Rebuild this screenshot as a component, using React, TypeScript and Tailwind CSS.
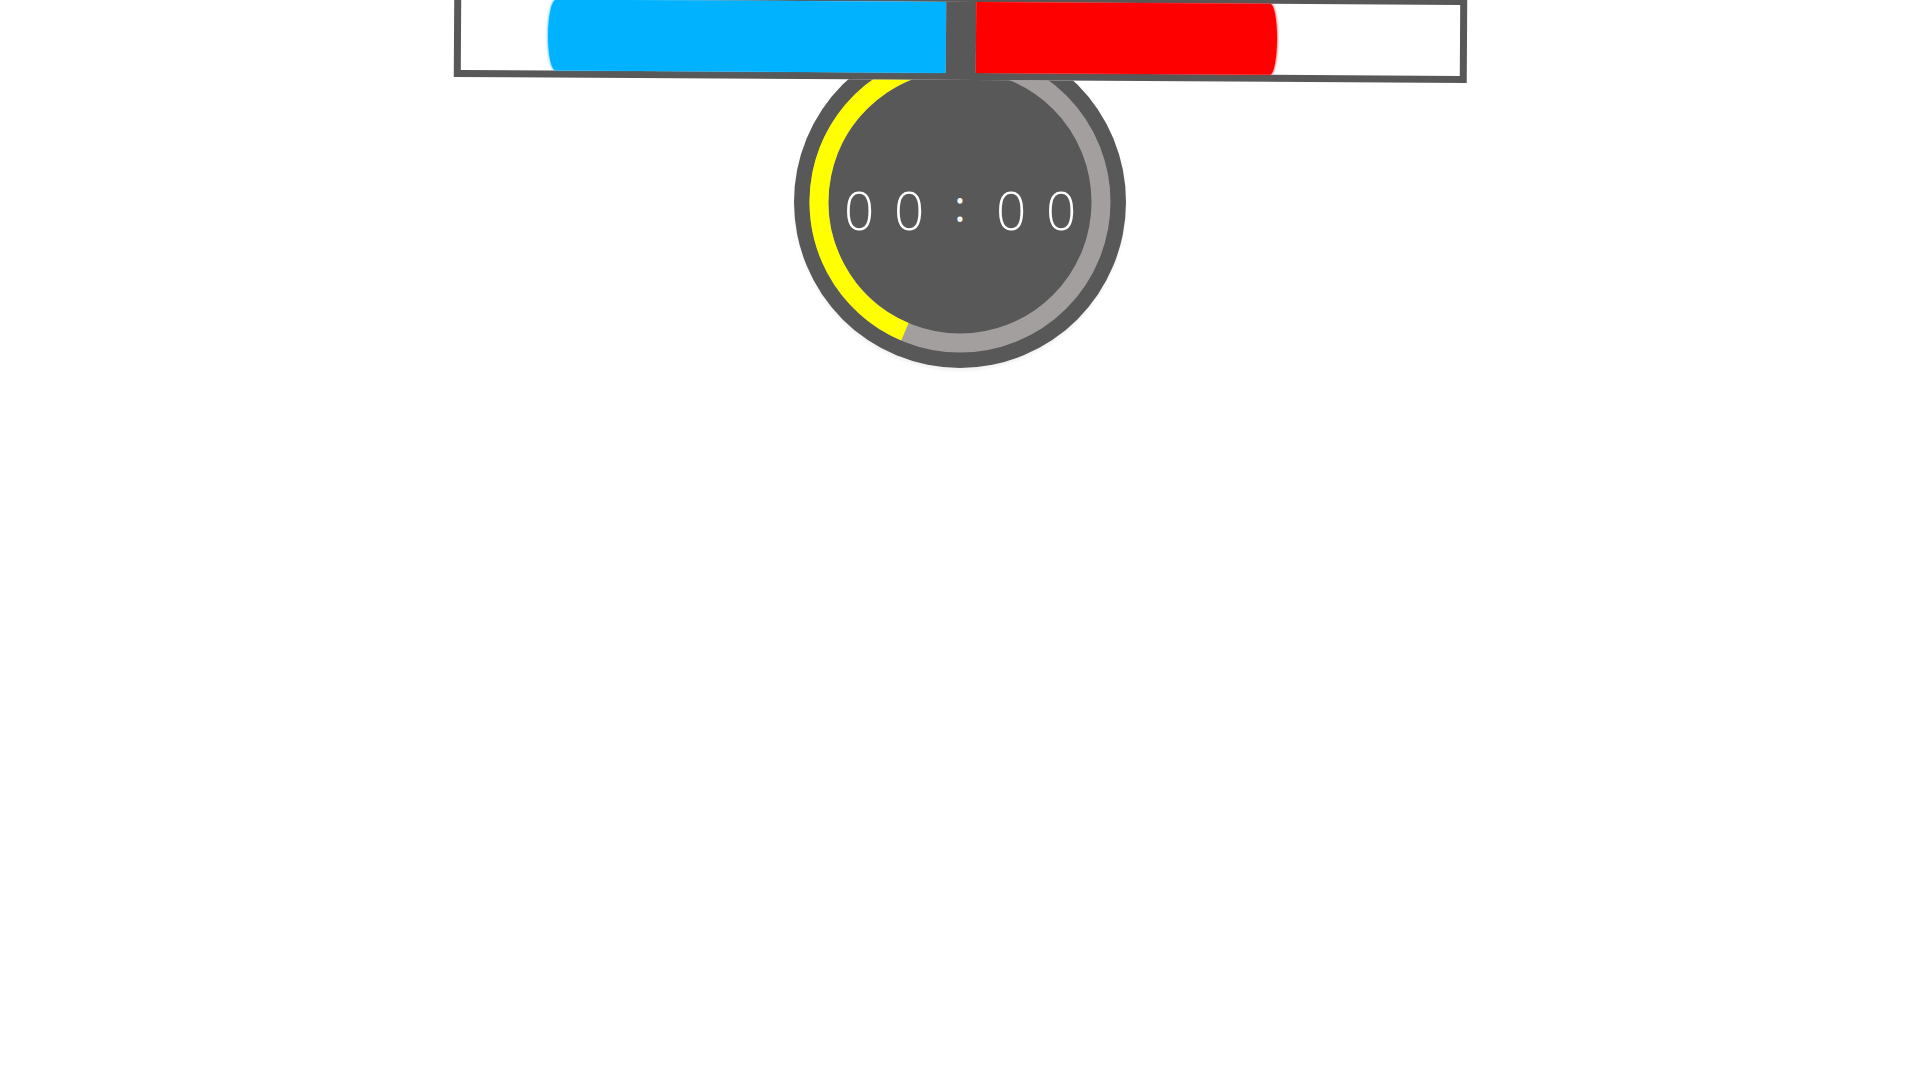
import React from "react";

const Digit = ({ c }: { c: string }) => (
  <span className="w-[30px] text-center">{c}</span>
);

export default function App() {
  return (
    <div className="w-full min-h-screen bg-white flex flex-col items-center overflow-hidden">
      {/* Health bar */}
      <div className="relative z-10 -mt-[5px] w-[1013px] h-[85px] rotate-[0.34deg] border-[7px] border-[#585858] bg-white flex">
        <div className="flex-1 flex justify-end">
          <div className="w-[398px] h-full bg-[#00b2ff] rounded-tl-[8px_36px] rounded-bl-[8px_36px] shadow-[-1px_0_2px_rgba(0,178,255,0.5)]" />
        </div>
        <div className="w-[30px] h-full bg-[#585858]" />
        <div className="flex-1 flex justify-start">
          <div className="w-[301px] h-full bg-[#ff0000] rounded-tr-[7px_36px] rounded-br-[7px_36px] shadow-[1px_0_2px_rgba(255,0,0,0.5)]" />
        </div>
      </div>

      {/* Timer */}
      <div className="relative -mt-[44px] w-[332px] h-[332px] rounded-full bg-[#585858] shadow-[0_3px_3px_rgba(0,0,0,0.05)] flex items-center justify-center">
        <svg
          className="absolute inset-0"
          width="332"
          height="332"
          viewBox="0 0 332 332"
        >
          <circle cx="166" cy="166" r="141" fill="none" stroke="#a39f9e" strokeWidth="19" />
          <path
            d="M110.9 295.8 A141 141 0 0 1 166 25"
            fill="none"
            stroke="#ffff00"
            strokeWidth="19"
          />
        </svg>
        <div
          className="relative mt-[15px] flex items-center gap-[20px] text-white text-[53px] leading-none font-light"
          style={{ fontFamily: '"Open Sans", "Noto Sans", sans-serif' }}
        >
          <Digit c="0" />
          <Digit c="0" />
          <span className="w-[32px] text-center text-[43px] leading-none mb-[8px] font-normal">:</span>
          <Digit c="0" />
          <Digit c="0" />
        </div>
      </div>
    </div>
  );
}
